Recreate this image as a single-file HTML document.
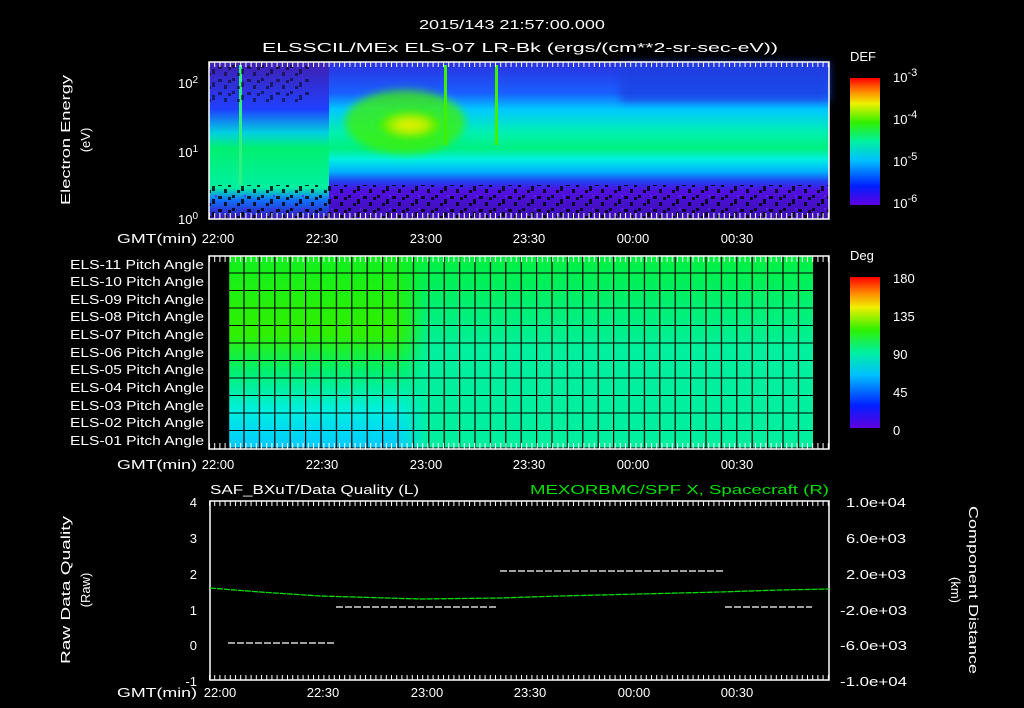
<!DOCTYPE html>
<html><head><meta charset="utf-8"><style>
html,body{margin:0;padding:0;background:#000;}
svg{display:block;font-family:"Liberation Sans",sans-serif;}
text{fill:#fff;font-size:13px;}
</style></head><body>
<svg width="1024" height="708" viewBox="0 0 1024 708" xmlns="http://www.w3.org/2000/svg">
<defs>
<linearGradient id="vspec" x1="0" y1="0" x2="0" y2="1">
<stop offset="0" stop-color="#2a30e0"/>
<stop offset="0.2" stop-color="#1a60ff"/>
<stop offset="0.3" stop-color="#00c8ff"/>
<stop offset="0.45" stop-color="#00f0b0"/>
<stop offset="0.55" stop-color="#00f080"/>
<stop offset="0.62" stop-color="#00f0e0"/>
<stop offset="0.7" stop-color="#00b0ff"/>
<stop offset="0.76" stop-color="#2040f0"/>
<stop offset="0.82" stop-color="#5010e0"/>
<stop offset="1" stop-color="#3a10b0"/>
</linearGradient>
<linearGradient id="leftv" x1="0" y1="0" x2="0" y2="1">
<stop offset="0" stop-color="#4020b0"/>
<stop offset="0.3" stop-color="#2040ff"/>
<stop offset="0.45" stop-color="#00d0e0"/>
<stop offset="0.55" stop-color="#00f070"/>
<stop offset="0.8" stop-color="#00f0a0"/>
<stop offset="0.88" stop-color="#1070ff"/>
<stop offset="1" stop-color="#3a10b0"/>
</linearGradient>
<radialGradient id="blob" cx="0.5" cy="0.5" r="0.5">
<stop offset="0" stop-color="#f0f000"/>
<stop offset="0.4" stop-color="#c0f000"/>
<stop offset="0.75" stop-color="#40f000" stop-opacity="0.8"/>
<stop offset="1" stop-color="#00f060" stop-opacity="0"/>
</radialGradient>
<pattern id="noise" width="29" height="13" patternUnits="userSpaceOnUse">
<rect x="0" y="0" width="3" height="3" fill="#000"/><rect x="9" y="4" width="3" height="5" fill="#000"/>
<rect x="15" y="1" width="4" height="3" fill="#000"/><rect x="5" y="8" width="3" height="3" fill="#000"/>
<rect x="21" y="7" width="3" height="4" fill="#000"/><rect x="25" y="2" width="3" height="3" fill="#000"/><rect x="12" y="0" width="2" height="2" fill="#6020ff"/>
</pattern>
<linearGradient id="pa" x1="0" y1="0" x2="0" y2="1">
<stop offset="0" stop-color="#00f040"/>
<stop offset="0.5" stop-color="#00f0a0"/>
<stop offset="1" stop-color="#00f0a0"/>
</linearGradient>
<linearGradient id="paL" x1="0" y1="0" x2="0" y2="1">
<stop offset="0" stop-color="#10f020"/>
<stop offset="0.4" stop-color="#30f000"/>
<stop offset="0.6" stop-color="#00f070"/>
<stop offset="0.8" stop-color="#00f0e0"/>
<stop offset="1" stop-color="#00c8ff"/>
</linearGradient>
<linearGradient id="paLh" x1="0" y1="0" x2="1" y2="0">
<stop offset="0" stop-color="#fff" stop-opacity="1"/>
<stop offset="0.85" stop-color="#fff" stop-opacity="1"/>
<stop offset="1" stop-color="#fff" stop-opacity="0"/>
</linearGradient>
<mask id="m1"><rect x="228" y="256" width="200" height="193" fill="url(#paLh)"/></mask>
<linearGradient id="cb" x1="0" y1="1" x2="0" y2="0">
<stop offset="0" stop-color="#6000e0"/>
<stop offset="0.15" stop-color="#0020ff"/>
<stop offset="0.35" stop-color="#00c0ff"/>
<stop offset="0.5" stop-color="#00f0a0"/>
<stop offset="0.65" stop-color="#30f000"/>
<stop offset="0.8" stop-color="#f0f000"/>
<stop offset="0.9" stop-color="#ff8000"/>
<stop offset="1" stop-color="#ff0000"/>
</linearGradient>
<pattern id="grid" x="228" y="256" width="15.4" height="17.5" patternUnits="userSpaceOnUse">
<rect x="0" y="0" width="1.2" height="17.5" fill="#000"/><rect x="0" y="16.5" width="15.4" height="1" fill="#000"/>
</pattern>
<pattern id="tk" x="209" y="0" width="5.2" height="10" patternUnits="userSpaceOnUse"><rect x="0" y="0" width="1" height="10" fill="#fff"/></pattern>
<filter id="bl"><feGaussianBlur stdDeviation="4"/></filter>
</defs>

<text x="512" y="29" text-anchor="middle" font-size="16" textLength="186" lengthAdjust="spacingAndGlyphs">2015/143 21:57:00.000</text>
<text x="262" y="52" font-size="16" textLength="516" lengthAdjust="spacingAndGlyphs">ELSSCIL/MEx ELS-07 LR-Bk  (ergs/(cm**2-sr-sec-eV))</text>

<!-- panel 1 -->
<rect x="209" y="62" width="620" height="157" fill="url(#vspec)"/>
<rect x="209" y="62" width="120" height="157" fill="url(#leftv)"/>
<g filter="url(#bl)">
<ellipse cx="405" cy="122" rx="60" ry="32" fill="#40f000" opacity="0.75"/>
<ellipse cx="410" cy="125" rx="40" ry="16" fill="url(#blob)"/>
<rect x="620" y="62" width="210" height="40" fill="#2040e0" opacity="0.7"/>
</g>
<rect x="239" y="65" width="3" height="120" fill="#30f080"/>
<rect x="444" y="65" width="3" height="80" fill="#40f000"/>
<rect x="495" y="65" width="3" height="80" fill="#40f000"/>
<rect x="209" y="185" width="620" height="34" fill="url(#noise)" opacity="0.8"/>
<rect x="209" y="62" width="100" height="40" fill="url(#noise)" opacity="0.5"/>
<rect x="209" y="62" width="620" height="5" fill="url(#tk)"/>
<rect x="209" y="213" width="620" height="6" fill="url(#tk)"/>
<rect x="209" y="62" width="620" height="157" fill="none" stroke="#fff" stroke-width="1.5"/>
<text x="198" y="88" text-anchor="end" font-size="13">10<tspan dy="-5" font-size="10">2</tspan></text>
<text x="198" y="157" text-anchor="end" font-size="13">10<tspan dy="-5" font-size="10">1</tspan></text>
<text x="198" y="224" text-anchor="end" font-size="13">10<tspan dy="-5" font-size="10">0</tspan></text>
<text transform="translate(70,140) rotate(-90)" text-anchor="middle" font-size="15" textLength="130" lengthAdjust="spacingAndGlyphs">Electron Energy</text>
<text transform="translate(90,140) rotate(-90)" text-anchor="middle" font-size="15">(eV)</text>
<g font-size="14"><text x="117" y="243" textLength="80" lengthAdjust="spacingAndGlyphs">GMT(min)</text>
<text x="218" y="243" text-anchor="middle" font-size="15">22:00</text><text x="322" y="243" text-anchor="middle" font-size="15">22:30</text><text x="426" y="243" text-anchor="middle" font-size="15">23:00</text><text x="529" y="243" text-anchor="middle" font-size="15">23:30</text><text x="633" y="243" text-anchor="middle" font-size="15">00:00</text><text x="737" y="243" text-anchor="middle" font-size="15">00:30</text></g>
<rect x="850" y="78" width="30" height="127" fill="url(#cb)"/>
<text x="850" y="61" font-size="16">DEF</text>
<text x="893" y="82" font-size="15">10<tspan dy="-6" font-size="11">-3</tspan></text>
<text x="893" y="124" font-size="15">10<tspan dy="-6" font-size="11">-4</tspan></text>
<text x="893" y="166" font-size="15">10<tspan dy="-6" font-size="11">-5</tspan></text>
<text x="893" y="208" font-size="15">10<tspan dy="-6" font-size="11">-6</tspan></text>

<!-- panel 2 -->
<rect x="228" y="256" width="585" height="193" fill="url(#pa)"/>
<rect x="228" y="256" width="200" height="193" fill="url(#paL)" mask="url(#m1)"/>
<rect x="228" y="256" width="585" height="193" fill="url(#grid)"/>
<rect x="209" y="256" width="620" height="6" fill="url(#tk)"/>
<rect x="209" y="443" width="620" height="6" fill="url(#tk)"/>
<rect x="209" y="256" width="620" height="193" fill="none" stroke="#fff" stroke-width="1.5"/>
<g font-size="13">
<text x="70" y="269" textLength="134" lengthAdjust="spacingAndGlyphs">ELS-11 Pitch Angle</text><text x="70" y="286" textLength="134" lengthAdjust="spacingAndGlyphs">ELS-10 Pitch Angle</text><text x="70" y="304" textLength="134" lengthAdjust="spacingAndGlyphs">ELS-09 Pitch Angle</text><text x="70" y="321" textLength="134" lengthAdjust="spacingAndGlyphs">ELS-08 Pitch Angle</text><text x="70" y="339" textLength="134" lengthAdjust="spacingAndGlyphs">ELS-07 Pitch Angle</text><text x="70" y="357" textLength="134" lengthAdjust="spacingAndGlyphs">ELS-06 Pitch Angle</text><text x="70" y="374" textLength="134" lengthAdjust="spacingAndGlyphs">ELS-05 Pitch Angle</text><text x="70" y="392" textLength="134" lengthAdjust="spacingAndGlyphs">ELS-04 Pitch Angle</text><text x="70" y="410" textLength="134" lengthAdjust="spacingAndGlyphs">ELS-03 Pitch Angle</text><text x="70" y="427" textLength="134" lengthAdjust="spacingAndGlyphs">ELS-02 Pitch Angle</text><text x="70" y="445" textLength="134" lengthAdjust="spacingAndGlyphs">ELS-01 Pitch Angle</text></g>
<g><text x="117" y="469" font-size="14" textLength="80" lengthAdjust="spacingAndGlyphs">GMT(min)</text>
<text x="218" y="469" text-anchor="middle" font-size="15">22:00</text><text x="322" y="469" text-anchor="middle" font-size="15">22:30</text><text x="426" y="469" text-anchor="middle" font-size="15">23:00</text><text x="529" y="469" text-anchor="middle" font-size="15">23:30</text><text x="633" y="469" text-anchor="middle" font-size="15">00:00</text><text x="737" y="469" text-anchor="middle" font-size="15">00:30</text></g>
<rect x="850" y="277" width="30" height="151" fill="url(#cb)"/>
<text x="850" y="260" font-size="16">Deg</text>
<g font-size="16"><text x="893" y="283">180</text><text x="893" y="321">135</text><text x="893" y="359">90</text><text x="893" y="397">45</text><text x="893" y="435">0</text></g>

<!-- panel 3 -->
<text x="210" y="494" font-size="16" textLength="209" lengthAdjust="spacingAndGlyphs">SAF_BXuT/Data Quality (L)</text>
<text x="530" y="494" font-size="16" style="fill:#00e000" textLength="299" lengthAdjust="spacingAndGlyphs">MEXORBMC/SPF X, Spacecraft (R)</text>
<rect x="209" y="501" width="620" height="5" fill="url(#tk)"/>
<rect x="209" y="675" width="620" height="5" fill="url(#tk)"/>
<rect x="210" y="501" width="619" height="179" fill="none" stroke="#fff" stroke-width="1.5"/>
<g font-size="14" text-anchor="end"><text x="197" y="507">4</text><text x="197" y="543">3</text><text x="197" y="579">2</text><text x="197" y="615">1</text><text x="197" y="650">0</text><text x="197" y="686">-1</text></g>
<g font-size="13"><text x="846" y="507" textLength="60" lengthAdjust="spacingAndGlyphs">1.0e+04</text><text x="846" y="543" textLength="60" lengthAdjust="spacingAndGlyphs">6.0e+03</text><text x="846" y="579" textLength="60" lengthAdjust="spacingAndGlyphs">2.0e+03</text><text x="840" y="615" textLength="67" lengthAdjust="spacingAndGlyphs">-2.0e+03</text><text x="840" y="650" textLength="67" lengthAdjust="spacingAndGlyphs">-6.0e+03</text><text x="840" y="686" textLength="67" lengthAdjust="spacingAndGlyphs">-1.0e+04</text></g>
<text transform="translate(70,590) rotate(-90)" text-anchor="middle" font-size="15" textLength="148" lengthAdjust="spacingAndGlyphs">Raw Data Quality</text>
<text transform="translate(90,590) rotate(-90)" text-anchor="middle" font-size="15">(Raw)</text>
<text transform="translate(969,590) rotate(90)" text-anchor="middle" font-size="15" textLength="168" lengthAdjust="spacingAndGlyphs">Component Distance</text>
<text transform="translate(951,590) rotate(90)" text-anchor="middle" font-size="15">(km)</text>
<polyline points="210,588 260,592 320,596 420,599 500,598 560,596 640,594 720,592 780,590 829,589" fill="none" stroke="#00e000" stroke-width="1.3" stroke-dasharray="6 1"/>
<g stroke="#fff" stroke-width="1.2" stroke-dasharray="7 2" fill="none">
<line x1="228" y1="643" x2="335" y2="643"/><line x1="336" y1="607" x2="498" y2="607"/><line x1="500" y1="571" x2="724" y2="571"/><line x1="725" y1="607" x2="812" y2="607"/></g>
<g><text x="117" y="697" font-size="14" textLength="80" lengthAdjust="spacingAndGlyphs">GMT(min)</text>
<text x="220" y="697" text-anchor="middle" font-size="15">22:00</text><text x="323" y="697" text-anchor="middle" font-size="15">22:30</text><text x="427" y="697" text-anchor="middle" font-size="15">23:00</text><text x="530" y="697" text-anchor="middle" font-size="15">23:30</text><text x="634" y="697" text-anchor="middle" font-size="15">00:00</text><text x="737" y="697" text-anchor="middle" font-size="15">00:30</text></g>
</svg>
</body></html>
